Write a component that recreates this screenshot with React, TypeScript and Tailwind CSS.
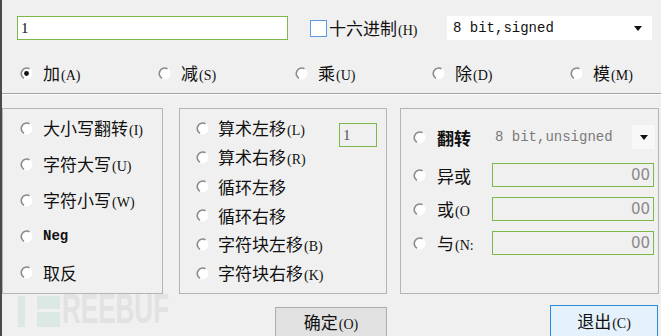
import React from "react";

const Radio = ({ checked = false }: { checked?: boolean }) => (
  <svg width="13" height="13" viewBox="0 0 13 13" className="shrink-0">
    <circle cx="6.5" cy="6.5" r="6" fill="#ffffff" />
    <path d="M9.5 1.8 A5.4 5.4 0 1 0 4 11.3" fill="none" stroke="#8a8a8a" strokeWidth="1.6" />
    {checked && <circle cx="6.5" cy="6.5" r="2.4" fill="#111" />}
  </svg>
);

const Key = ({ k }: { k: string }) => (
  <span className="text-[14px] font-['Liberation_Serif',serif] ml-[1px]">({k})</span>
);

const OpRadio = ({ label, k, checked }: { label: string; k: string; checked?: boolean }) => (
  <div className="flex items-center gap-[10px]">
    <Radio checked={checked} />
    <span className="text-[17px] leading-none whitespace-nowrap">
      {label}
      <Key k={k} />
    </span>
  </div>
);

const Row = ({ label, k, gap = "gap-[10px]" }: { label: string; k?: string; gap?: string }) => (
  <div className={`flex items-center h-[20px] ${gap}`}>
    <Radio />
    <span className="text-[17px] leading-none whitespace-nowrap">
      {label}
      {k && <Key k={k} />}
    </span>
  </div>
);

const HexInput = () => (
  <div className="w-[162px] h-[24px] border border-[#7cb84a] bg-[#f0f0f0] flex items-center justify-end pr-[3px] text-[15px] text-[#8a8a8a] font-['DejaVu_Sans',sans-serif]">
    00
  </div>
);

const Arrow = () => (
  <svg width="8" height="5" viewBox="0 0 8 5">
    <path d="M0 0 H8 L4 5 Z" fill="#111" />
  </svg>
);

export default function App() {
  return (
    <div className="w-[661px] h-[336px] bg-[#f0f0f0] border-l-2 border-[#4a4a4a] relative overflow-hidden flex flex-col text-[#111] font-['Noto_Sans_CJK_SC',sans-serif]">
      {/* top row */}
      <div className="shrink-0 flex items-center mt-[16px] h-[24px]">
        <div className="ml-[15px] w-[271px] h-[24px] border border-[#7cb84a] bg-white flex items-center pl-[3px] text-[15px] font-['Liberation_Serif',serif]">
          1
        </div>
        <div className="ml-[22px] w-[137px] flex items-center">
          <div className="w-[17px] h-[17px] border-[1.5px] border-[#5a9be0] bg-white" />
          <span className="ml-[2px] text-[17px] leading-none whitespace-nowrap">
            十六进制<Key k="H" />
          </span>
        </div>
        <div className="w-[205px] h-[24px] bg-white flex items-center pl-[6px] pr-[10px] text-[14px] font-['Liberation_Mono',monospace]">
          <span className="flex-1">8 bit,signed</span>
          <Arrow />
        </div>
      </div>

      {/* operation radios */}
      <div className="shrink-0 flex items-center mt-[23px] h-[20px] ml-[18px]">
        <div className="w-[138px]"><OpRadio label="加" k="A" checked /></div>
        <div className="w-[137px]"><OpRadio label="减" k="S" /></div>
        <div className="w-[137px]"><OpRadio label="乘" k="U" /></div>
        <div className="w-[138px]"><OpRadio label="除" k="D" /></div>
        <div><OpRadio label="模" k="M" /></div>
      </div>

      <div className="shrink-0 mt-[10px] h-[2px] border-t border-[#a0a0a0] border-b border-b-white" />

      {/* groups */}
      <div className="shrink-0 flex mt-[13px] h-[186px]">
        <div className="w-[161px] border border-[#b4b4b4] flex flex-col pt-[9px] pl-[17px] gap-[16px]">
          <Row label="大小写翻转" k="I" />
          <Row label="字符大写" k="U" />
          <Row label="字符小写" k="W" />
          <div className="flex items-center h-[20px] gap-[10px]">
            <Radio />
            <span className="text-[14px] font-bold font-['Liberation_Mono',monospace]">Neg</span>
          </div>
          <Row label="取反" />
        </div>

        <div className="ml-[16px] w-[208px] border border-[#b4b4b4] flex flex-col pt-[9px] pl-[16px] gap-[9px]">
          <div className="flex h-[20px] pr-[9px]">
            <Row label="算术左移" k="L" gap="gap-[9px]" />
            <div className="ml-auto mt-[5px] w-[38px] h-[24px] border border-[#7cb84a] bg-[#f0f0f0] flex items-center pl-[3px] text-[15px] text-[#555] font-['Liberation_Serif',serif]">
              1
            </div>
          </div>
          <Row label="算术右移" k="R" gap="gap-[9px]" />
          <Row label="循环左移" gap="gap-[9px]" />
          <Row label="循环右移" gap="gap-[9px]" />
          <Row label="字符块左移" k="B" gap="gap-[9px]" />
          <Row label="字符块右移" k="K" gap="gap-[9px]" />
        </div>

        <div className="ml-[13px] w-[259px] border border-[#b4b4b4] flex flex-col pt-[14px] pl-[12px]">
          <div className="flex items-center h-[28px]">
            <div className="w-[79px] flex items-center gap-[11px]">
              <Radio />
              <span className="text-[17px] leading-none font-bold">翻转</span>
            </div>
            <div className="w-[163px] h-[28px] flex items-center pl-[3px] text-[14px] text-[#7a7a7a] font-['Liberation_Mono',monospace]">
              <span className="flex-1 whitespace-nowrap">8 bit,unsigned</span>
              <div className="w-[23px] h-[24px] bg-[#f8f8f8] flex items-center justify-center">
                <Arrow />
              </div>
            </div>
          </div>
          <div className="flex flex-col gap-[10px] mt-[12px]">
            <div className="flex items-center h-[24px]">
              <div className="w-[79px] flex items-center gap-[11px]">
                <Radio />
                <span className="text-[17px] leading-none">异或</span>
              </div>
              <HexInput />
            </div>
            <div className="flex items-center h-[24px]">
              <div className="w-[79px] flex items-center gap-[11px]">
                <Radio />
                <span className="whitespace-nowrap text-[17px] leading-none">
                  或<span className="text-[14px] font-['Liberation_Serif',serif] ml-[1px]">(O</span>
                </span>
              </div>
              <HexInput />
            </div>
            <div className="flex items-center h-[24px]">
              <div className="w-[79px] flex items-center gap-[11px]">
                <Radio />
                <span className="whitespace-nowrap text-[17px] leading-none">
                  与<span className="text-[14px] font-['Liberation_Serif',serif] ml-[1px]">(N:</span>
                </span>
              </div>
              <HexInput />
            </div>
          </div>
        </div>
      </div>

      {/* buttons */}
      <div className="shrink-0 flex items-start mt-[11px]">
        <button className="shrink-0 ml-[273px] mt-[2px] w-[112px] h-[34px] bg-[#e1e1e1] border border-[#adadad] text-[17px] leading-none pb-[4px]">
          确定<Key k="O" />
        </button>
        <button className="shrink-0 ml-[163px] w-[108px] h-[34px] bg-[#e5f1fb] border border-[#2a8ad8] text-[17px] leading-none pb-[2px]">
          退出<Key k="C" />
        </button>
      </div>

      {/* watermark */}
      <div className="absolute left-[16px] top-[296px] flex items-start pointer-events-none">
        <div className="w-[7px] h-[31px] bg-[#dce8e3]" />
        <div className="ml-[12px] w-[23px] flex flex-col gap-[3px]">
          <div className="h-[13px] bg-[#dce8e3]" />
          <div className="h-[15px] bg-[#dce8e3]" />
        </div>
        <span className="ml-[2px] -mt-[8px] text-[42px] font-bold leading-none text-[#e2e2e2] font-['Liberation_Sans',sans-serif] origin-left [transform:scaleX(0.62)] inline-block whitespace-nowrap">
          REEBUF
        </span>
      </div>
    </div>
  );
}
